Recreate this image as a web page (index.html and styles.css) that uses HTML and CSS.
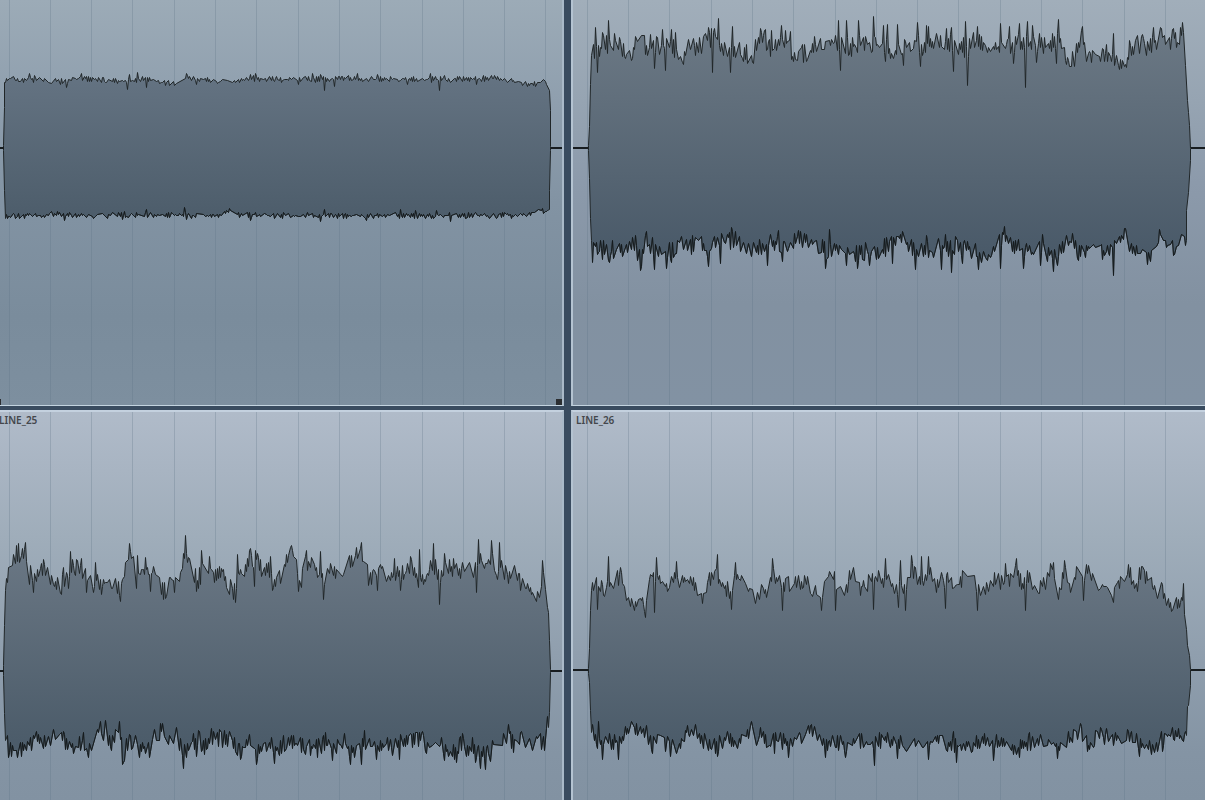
FILE: index.html
```
<!DOCTYPE html>
<html lang="en">
<head>
  <meta charset="UTF-8" />
  <meta name="viewport" content="width=device-width, initial-scale=1.0"/>
  <title>Arrangement</title>
  <link rel="stylesheet" href="styles.css">
</head>
<body>
  <main class="tracks">
    <section class="clip upper left">
      <svg class="wave" data-clip="line23" viewBox="0 0 562 405" preserveAspectRatio="none"></svg>
      <span class="handle start"></span>
      <span class="handle end"></span>
    </section>
    <section class="clip upper right">
      <svg class="wave" data-clip="line24" viewBox="573 0 632 405" preserveAspectRatio="none"></svg>
    </section>
    <section class="clip lower left">
      <h2>LINE_25</h2>
      <svg class="wave" data-clip="line25" viewBox="0 412 562 388" preserveAspectRatio="none"></svg>
    </section>
    <section class="clip lower right">
      <h2>LINE_26</h2>
      <svg class="wave" data-clip="line26" viewBox="573 412 632 388" preserveAspectRatio="none"></svg>
    </section>
  </main>

  <script src="waves.js"></script>
</body>
</html>
```

FILE: styles.css
```
body {
  margin: 0;
  background: #394b5f;
  overflow: hidden;
}
.tracks {
  display: grid;
  grid-template-columns: 564fr 634fr;
  grid-template-rows: 406fr 390fr;
  gap: 4px 7px;
  height: 100vh;
}
.clip {
  position: relative;
  box-sizing: border-box;
  min-width: 0;
  min-height: 0;
  overflow: hidden;
}
.left {
  border-right: 2px solid #a9b9c8;
}
.right {
  border-left: 2px solid #b4c3d1;
}
.upper {
  border-bottom: 1px solid #c3d3df;
}
.lower {
  border-top: 2px solid #c4d1df;
  background: linear-gradient(#b0bbc9 0%, #a8b4c2 15%, #9fadba 32%, #909fae 62%, #8494a4 88%, #8292a2 100%);
}
.upper.left {
  background: linear-gradient(#9cabb7 0%, #8f9fae 25%, #8293a3 50%, #7a8c9c 78%, #7d8f9f 100%);
}
.upper.right {
  background: linear-gradient(#a1aeba 0%, #96a4b2 25%, #8c9aab 45%, #8291a1 75%, #8292a3 100%);
}
.clip h2 {
  position: absolute;
  top: 1px;
  left: 3px;
  margin: 0;
  font: 600 10px/14px "Noto Sans", "Open Sans", sans-serif;
  color: #44474c;
}
.left h2 {
  left: -1px;
}
.wave {
  display: block;
  width: 100%;
  height: 100%;
}
.wave line {
  stroke: #5f7386;
  stroke-opacity: 0.28;
}
.wave path {
  stroke: #202628;
  stroke-width: 1;
  stroke-linejoin: bevel;
}
.wave .trough {
  stroke: #12181b;
  stroke-opacity: 0.7;
}
.wave .silence {
  stroke: #181d20;
  stroke-width: 2;
}
.handle {
  position: absolute;
  bottom: 0;
  width: 6px;
  height: 6px;
  background: #2b2e31;
}
.handle.start {
  left: -5px;
}
.handle.end {
  right: 0;
}
```

FILE: waves.js
```
// base = slow envelope "x,y", spikes = single transients "x,y"
const clips = {
  line23: {
    mid: 148, noise: 3, lead: [0, 3], tail: [551, 562],
    fill: ['#647382', '#4d5d6b'], span: [76, 216],
    attack: '3,145 4,107 4,82', release: '549,90 550,110 550,146',
    fall: '550,150 549,190 549,209', rise: '5,218 4,190 3,150',
    top: '5,79 9,78 30,79 60,81 72,79 90,78 118,81 130,80 150,79 176,84 180,79 186,76 200,79 235,81 250,78 290,79 360,78 420,79 495,78 510,80 525,84 535,84 542,80 548,85',
    topSpikes: '29,73 34,75 66,87 81,73 127,89 129,74 137,72 146,87 186,73 196,84 250,74 255,73 298,84 312,73 320,74 324,90 334,86 357,73 377,74 407,84 430,73 439,90 444,75 476,84',
    bottom: '6,216 25,215 30,213 40,216 56,213 63,213 70,214 105,216 112,212 120,214 200,215 220,215 229,210 240,215 500,215 525,215 541,209 545,212 548,210',
    bottomSpikes: '64,220 122,219 146,209 184,207 186,219 229,208 250,220 320,221 324,209 366,220 400,209 415,210 436,210 450,221'
  },
  line24: {
    mid: 148, noise: 10, lead: [573, 587], tail: [1191, 1205],
    fill: ['#6c7985', '#4a5a69'], span: [25, 250],
    attack: '588,145 589,126 590,84 591,55', release: '1185,65 1187,100 1188,112 1189,125 1190,148',
    fall: '1190,160 1188,192 1186,210 1186,240', rise: '591,240 590,218 589,178 588,150',
    top: '592,48 600,48 603,36 608,47 613,43 625,50 632,55 636,40 640,35 646,48 670,45 683,60 686,45 700,47 706,35 712,38 716,33 720,50 745,52 752,60 757,38 763,34 768,48 785,38 793,55 812,50 820,42 835,42 850,46 870,42 885,48 895,52 905,45 917,38 920,50 930,42 960,45 967,50 977,35 985,50 1000,45 1020,42 1040,46 1050,45 1058,35 1067,62 1074,60 1078,42 1082,34 1086,52 1110,52 1114,60 1126,60 1135,45 1150,45 1155,40 1162,35 1167,50 1173,35 1177,42 1183,30 1184,32',
    topSpikes: '595,27 597,72 602,32 608,20 614,33 619,37 650,34 654,68 656,36 662,29 665,70 671,29 675,32 683,64 708,27 712,72 714,28 718,18 730,72 732,26 752,62 761,32 765,29 771,30 781,25 790,31 793,61 814,36 838,20 840,70 846,20 851,56 858,20 873,16 883,25 885,61 887,24 897,24 903,65 917,22 920,66 926,25 928,26 946,28 951,27 953,71 965,21 967,85 977,26 1000,23 1009,26 1013,63 1019,23 1025,87 1027,21 1032,25 1036,62 1039,33 1056,63 1058,19 1066,64 1082,26 1111,61 1113,33 1125,64 1129,40 1142,34 1153,27 1161,28 1172,29 1182,22',
    bottom: '592,245 600,245 608,252 615,248 630,245 636,248 640,262 645,243 655,245 665,253 673,250 679,237 690,245 700,237 708,255 714,240 722,243 730,240 745,248 752,250 765,245 775,242 782,250 790,242 799,235 805,240 815,242 825,252 838,245 857,255 866,250 872,256 890,243 900,238 910,248 925,252 935,248 960,245 975,252 990,256 1000,242 1004,232 1010,243 1025,250 1050,252 1055,260 1065,242 1073,240 1080,255 1095,243 1103,253 1115,240 1124,234 1135,250 1142,243 1148,256 1159,237 1168,242 1173,252 1182,236 1185,246',
    bottomSpikes: '592,262 602,259 609,262 635,235 641,266 646,231 654,269 666,268 671,262 708,266 720,263 731,227 735,231 767,265 778,230 782,261 798,230 825,268 829,229 846,265 857,268 869,265 892,263 900,234 915,269 926,235 941,269 945,234 951,272 962,263 978,269 1000,268 1004,226 1023,268 1040,265 1042,234 1053,271 1078,260 1113,275 1124,228 1147,264 1159,229 1173,255'
  },
  line25: {
    mid: 671, noise: 10, lead: [0, 3], tail: [551, 562],
    fill: ['#6a7784', '#4c5c6a'], span: [550, 740],
    attack: '3,665 4,625 5,590', release: '548,612 549,640 550,669',
    fall: '550,672 549,712 548,727', rise: '5,740 4,713 3,675',
    top: '6,580 8,570 12,562 17,552 21,560 25,552 29,575 38,572 45,568 50,575 55,588 62,582 68,582 72,565 80,572 88,575 95,578 100,586 108,580 115,583 120,595 123,570 130,552 136,578 140,570 150,570 156,572 160,590 167,592 170,573 176,588 180,575 185,552 190,565 197,580 203,568 210,565 215,578 222,570 230,586 235,595 237,575 243,572 250,552 254,578 257,553 262,578 267,562 272,582 280,575 286,560 292,552 300,585 306,560 320,575 335,570 345,572 350,562 361,553 369,578 380,565 390,578 400,570 405,572 412,565 418,578 425,580 432,562 440,578 447,562 455,572 468,562 472,575 478,558 485,565 492,557 496,580 500,565 508,578 513,568 520,582 528,585 534,599 539,590 543,572 545,590 547,606',
    topSpikes: '18,543 24,549 33,592 43,559 61,594 63,567 70,551 76,559 81,558 86,592 93,592 95,562 101,594 120,601 129,543 137,555 145,557 150,591 165,598 185,535 196,591 201,550 209,556 235,602 237,554 249,550 255,550 270,556 291,545 298,591 306,550 320,551 323,599 361,542 377,590 394,558 400,590 410,556 419,549 433,543 439,604 444,553 453,558 476,592 478,539 491,540 499,542 542,560',
    bottom: '7,735 9,745 18,750 28,745 36,735 45,745 50,738 60,738 70,746 80,746 90,750 94,732 105,730 110,745 113,732 120,730 123,752 130,742 140,748 150,745 158,732 165,729 169,738 177,735 183,752 190,746 198,735 203,746 212,735 222,738 230,740 240,748 250,742 256,752 265,742 275,750 287,740 300,745 320,748 325,739 333,746 345,742 350,752 363,738 375,746 395,746 410,740 422,737 425,748 440,742 450,752 460,745 475,748 485,754 500,745 508,733 515,750 521,733 530,750 537,738 545,746 547,724',
    bottomSpikes: '8,757 17,757 63,731 83,732 88,757 111,750 122,764 130,735 149,757 183,768 196,756 198,730 240,759 256,764 274,763 323,735 332,760 350,764 361,764 376,759 399,759 411,734 422,731 444,760 456,762 462,733 475,762 480,768 485,769'
  },
  line26: {
    mid: 670, noise: 9, lead: [573, 587], tail: [1191, 1205],
    fill: ['#697683', '#4c5c6a'], span: [560, 740],
    attack: '588,668 589,648 590,610 591,590', release: '1186,629 1187,645 1189,655 1190,669',
    fall: '1190,685 1188,705 1187,706 1186,735', rise: '591,732 590,710 589,682 588,673',
    top: '592,583 605,588 612,580 620,578 625,590 630,604 642,600 645,611 649,575 656,575 664,585 675,578 690,580 697,590 701,600 708,580 715,575 722,585 730,593 735,578 745,578 752,595 765,592 772,572 780,585 795,580 810,585 820,598 825,580 831,570 837,588 845,588 852,572 860,588 870,580 880,578 886,580 895,588 905,592 911,565 918,582 925,580 930,568 935,585 950,574 955,588 965,574 975,582 985,590 995,580 1005,585 1015,572 1022,586 1028,574 1035,588 1045,582 1052,568 1058,595 1064,568 1070,585 1077,572 1083,578 1087,570 1095,582 1105,588 1113,599 1115,577 1124,588 1128,572 1137,588 1142,570 1155,590 1162,590 1170,603 1178,600 1184,606',
    topSpikes: '597,609 608,556 620,567 645,617 654,612 656,557 676,561 717,554 731,609 735,562 772,558 782,610 821,610 835,610 873,609 885,558 898,607 900,560 905,610 911,555 921,556 928,556 945,608 977,610 1005,563 1016,558 1025,610 1053,562 1064,560 1083,600 1128,564 1139,567 1162,584 1183,583',
    bottom: '592,733 597,743 603,742 615,742 620,740 625,733 633,727 641,732 645,729 651,743 665,742 678,748 685,734 697,730 702,740 715,748 727,735 735,743 745,735 751,725 755,738 760,729 768,746 775,740 790,743 798,734 805,737 811,728 818,738 835,743 845,743 855,738 870,743 885,738 895,743 905,743 915,740 928,744 940,738 955,746 970,744 985,738 1000,744 1015,748 1030,743 1050,742 1065,742 1080,732 1088,746 1100,734 1115,738 1127,734 1140,744 1155,746 1165,735 1175,735 1185,735',
    bottomSpikes: '598,721 602,759 618,759 652,753 670,756 687,725 717,756 751,721 774,753 788,757 811,724 825,757 845,757 874,765 897,758 928,759 953,731 956,762 993,760 1019,757 1029,732 1057,758 1081,726 1100,727 1127,729 1139,756 1162,751'
  }
};

const parse = text => text.split(' ').map(p => p.split(',').map(Number));

let seed = 7;
function random() {
  seed = (seed * 1103515245 + 12345) % 2147483648;
  return seed / 2147483648;
}

function edge(base, spikes, noise) {
  const pts = parse(base);
  const hits = new Map(parse(spikes));
  const out = [];
  let i = 0;
  let side = 1;
  for (let x = pts[0][0]; x <= pts[pts.length - 1][0]; x++) {
    while (i < pts.length - 2 && x > pts[i + 1][0]) i++;
    const [x0, y0] = pts[i];
    const [x1, y1] = pts[i + 1];
    const y = y0 + (y1 - y0) * (x - x0) / (x1 - x0);
    if (hits.has(x)) {
      out.push([x, hits.get(x)]);
    } else if (random() > 0.4 || hits.has(x - 1) || hits.has(x + 1)) {
      // mostly swing to the other side of the envelope
      if (random() > 0.15) side = -side;
      out.push([x, Math.round(y + side * noise * random())]);
    }
  }
  return out;
}

const toPath = pts => 'M' + pts.map(([x, y]) => `${x + 0.5},${y + 0.5}`).join('L');

document.querySelectorAll('.wave').forEach(svg => {
  const id = svg.dataset.clip;
  const c = clips[id];
  const bottom = edge(c.bottom, c.bottomSpikes, c.noise).reverse();
  const outline = [
    ...parse(c.attack),
    ...edge(c.top, c.topSpikes, c.noise),
    ...parse(c.release),
    ...parse(c.fall),
    ...bottom,
    ...parse(c.rise)
  ];

  let grid = '';
  for (let n = 0; n < 29; n++) {
    const x = Math.floor(9 + n * 41.3) + 0.5;
    grid += `<line x1="${x}" x2="${x}" y1="0" y2="800"/>`;
  }

  svg.innerHTML = `
    <linearGradient id="${id}" gradientUnits="userSpaceOnUse" x1="0" x2="0" y1="${c.span[0]}" y2="${c.span[1]}">
      <stop offset="0" stop-color="${c.fill[0]}"/><stop offset="1" stop-color="${c.fill[1]}"/>
    </linearGradient>
    ${grid}
    <path fill="url(#${id})" d="${toPath(outline)}Z"/>
    <path class="trough" fill="none" d="${toPath(bottom)}"/>
    <path class="silence" fill="none" d="M${c.lead[0]},${c.mid}H${c.lead[1] + 1}M${c.tail[0]},${c.mid}H${c.tail[1]}"/>`;
});
```
